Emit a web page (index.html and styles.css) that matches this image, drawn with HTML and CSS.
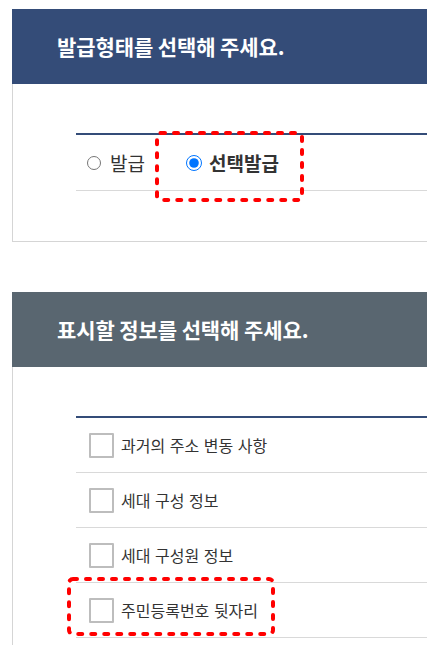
FILE: index.html
```html
<!DOCTYPE html>
<html>
<head>
    <meta charset="utf-8" />
    <title>발급형태 선택</title>
    <link rel="stylesheet" href="styles.css">
</head>
<body>
    <div class="section">
        <h2 class="sec_title">발급형태를 선택해 주세요.</h2>
        <div class="sec_body">
            <div class="opt_table">
                <div class="opt_row radio_row">
                    <label class="radio_item"><input type="radio" name="issue" /> 발급</label>
                    <label class="radio_item on"><input type="radio" name="issue" checked /> 선택발급</label>
                </div>
            </div>
        </div>
        <svg class="mark mark1" width="149" height="71" viewBox="0 0 149 71">
            <rect x="2" y="2" width="145" height="67" rx="4" />
        </svg>
    </div>

    <div class="section gray">
        <h2 class="sec_title">표시할 정보를 선택해 주세요.</h2>
        <div class="sec_body">
            <div class="opt_table">
                <div class="opt_row"><span class="chk"></span>과거의 주소 변동 사항</div>
                <div class="opt_row"><span class="chk"></span>세대 구성 정보</div>
                <div class="opt_row"><span class="chk"></span>세대 구성원 정보</div>
                <div class="opt_row"><span class="chk"></span>주민등록번호 뒷자리</div>
            </div>
        </div>
        <svg class="mark mark2" width="208" height="59" viewBox="0 0 208 59">
            <rect x="2" y="2" width="204" height="55" rx="4" />
        </svg>
    </div>
</body>
</html>
```

FILE: styles.css
```css
html {
    overflow: hidden;
}
body {
    margin: 0;
    padding: 9px 0 0 12px;
    font-family: "Noto Sans CJK KR", sans-serif;
    color: #222;
    background: #fff;
}
.section {
    position: relative;
    width: 480px;
    border: 1px solid #d5d5d5;
    border-top: none;
    margin-bottom: 50px;
}
.sec_title {
    margin: 0 -1px;
    height: 75px;
    line-height: 75px;
    padding-left: 45px;
    background: #344c78;
    color: #fff;
    font-size: 21px;
    font-weight: 700;
    letter-spacing: -0.1px;
}
.section.gray .sec_title {
    background: #596670;
}
.sec_body {
    padding: 49px 0 50px 63px;
}
.opt_table {
    border-top: 2px solid #344c78;
}
.opt_row {
    display: flex;
    align-items: center;
    height: 54px;
    border-bottom: 1px solid #d9d9d9;
    padding-left: 13px;
    font-size: 16px;
    word-spacing: 1px;
    color: #333;
}
.radio_row {
    height: 55px;
    padding-left: 11px;
    font-size: 19px;
    word-spacing: 0;
}
.radio_item {
    display: flex;
    align-items: center;
    margin-right: 41px;
}
.radio_item input {
    width: 14px;
    height: 14px;
    margin: 0 9px 0 0;
}
.radio_item.on {
    font-weight: 700;
}
.radio_item.on input {
    width: 16px;
    height: 16px;
    margin-right: 7px;
}
.chk {
    box-sizing: border-box;
    width: 25px;
    height: 25px;
    border: 2px solid #bdbdbd;
    border-radius: 1px;
    margin-right: 7px;
}
.mark {
    position: absolute;
}
.mark rect {
    fill: none;
    stroke: #ff0000;
    stroke-width: 4;
    stroke-dasharray: 4 9;
    stroke-linecap: round;
}
.mark1 {
    left: 142px;
    top: 122px;
}
.mark2 {
    left: 54px;
    top: 285px;
}
```
